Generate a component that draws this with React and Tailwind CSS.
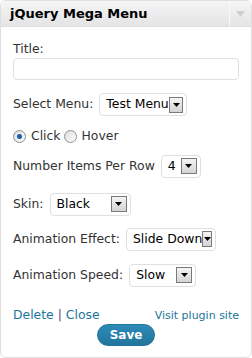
const Arrow = () => (
  <span className="flex h-[16px] w-[16px] items-center justify-center border border-[#7a7a7a] bg-gradient-to-b from-[#f4f4f4] to-[#d4d4d4]">
    <svg width="7" height="4" viewBox="0 0 7 4"><path d="M0 0h7L3.5 4z" fill="#000" /></svg>
  </span>
);

const Select = ({ value, w }) => (
  <div className={`flex h-[23px] items-center justify-between rounded-[4px] border border-[#dfdfdf] bg-white pl-[6px] pr-[3px] ${w}`}>
    <span className="whitespace-nowrap text-[#000]">{value}</span>
    <Arrow />
  </div>
);

const Radio = ({ on }) => (
  <span className="flex h-[13px] w-[13px] items-center justify-center rounded-full border border-[#8e8f8f] bg-gradient-to-br from-[#dcdcdc] to-[#ffffff]">
    {on && <span className="h-[5px] w-[5px] rounded-full bg-[#1a5fa8]" />}
  </span>
);

export default function App() {
  return (
    <div className="h-[358px] w-[252px] bg-white font-['DejaVu_Sans',Verdana,sans-serif] text-[12.4px] text-[#333]">
      <div className="flex h-[358px] flex-col rounded-[6px] border border-[#dfdfdf]">
        <div className="flex h-[26px] items-stretch rounded-t-[6px] border-b border-[#dfdfdf] bg-gradient-to-b from-[#f5f5f5] to-[#e4e4e4]">
          <div className="flex flex-1 items-center pl-[9px] text-[13px] font-bold text-[#000]">jQuery Mega Menu</div>
          <div className="flex w-[22px] items-center justify-center border-l border-[#f9f9f9]">
            <svg width="9" height="6" viewBox="0 0 9 6"><path d="M0 0h9L4.5 6z" fill="#cfcfcf" /></svg>
          </div>
        </div>
        <div className="flex flex-col px-[12px]">
          <div className="mt-[14px] leading-[15px]">Title:</div>
          <div className="mt-[2px] h-[22px] rounded-[4px] border border-[#dfdfdf]" />
          <div className="mt-[13px] flex items-center gap-[6px]">
            <span>Select Menu:</span>
            <Select value="Test Menu" w="w-[88px]" />
          </div>
          <div className="mt-[11px] flex items-center">
            <Radio on />
            <span className="ml-[5px]">Click</span>
            <span className="ml-[3px]"><Radio /></span>
            <span className="ml-[5px]">Hover</span>
          </div>
          <div className="mt-[9px] flex items-center gap-[6px]">
            <span>Number Items Per Row</span>
            <Select value="4" w="w-[40px]" />
          </div>
          <div className="mt-[15px] flex items-center gap-[6px]">
            <span>Skin:</span>
            <Select value="Black" w="w-[81px]" />
          </div>
          <div className="mt-[12px] flex items-center gap-[6px]">
            <span>Animation Effect:</span>
            <Select value="Slide Down" w="w-[90px]" />
          </div>
          <div className="mt-[13px] flex items-center gap-[6px]">
            <span>Animation Speed:</span>
            <Select value="Slow" w="w-[67px]" />
          </div>
          <div className="mt-[19px] flex items-end justify-between">
            <div className="text-[#21759b]">
              Delete <span className="text-[#6b3d86]">|</span> Close
            </div>
            <div className="text-[11px] text-[#21759b]">Visit plugin site</div>
          </div>
          <div className="mt-0 flex justify-center">
            <button className="h-[22px] rounded-full border border-[#21759b] bg-gradient-to-b from-[#2e8ab8] to-[#21759b] px-[12px] text-[12px] font-bold text-white">
              Save
            </button>
          </div>
        </div>
      </div>
    </div>
  );
}
